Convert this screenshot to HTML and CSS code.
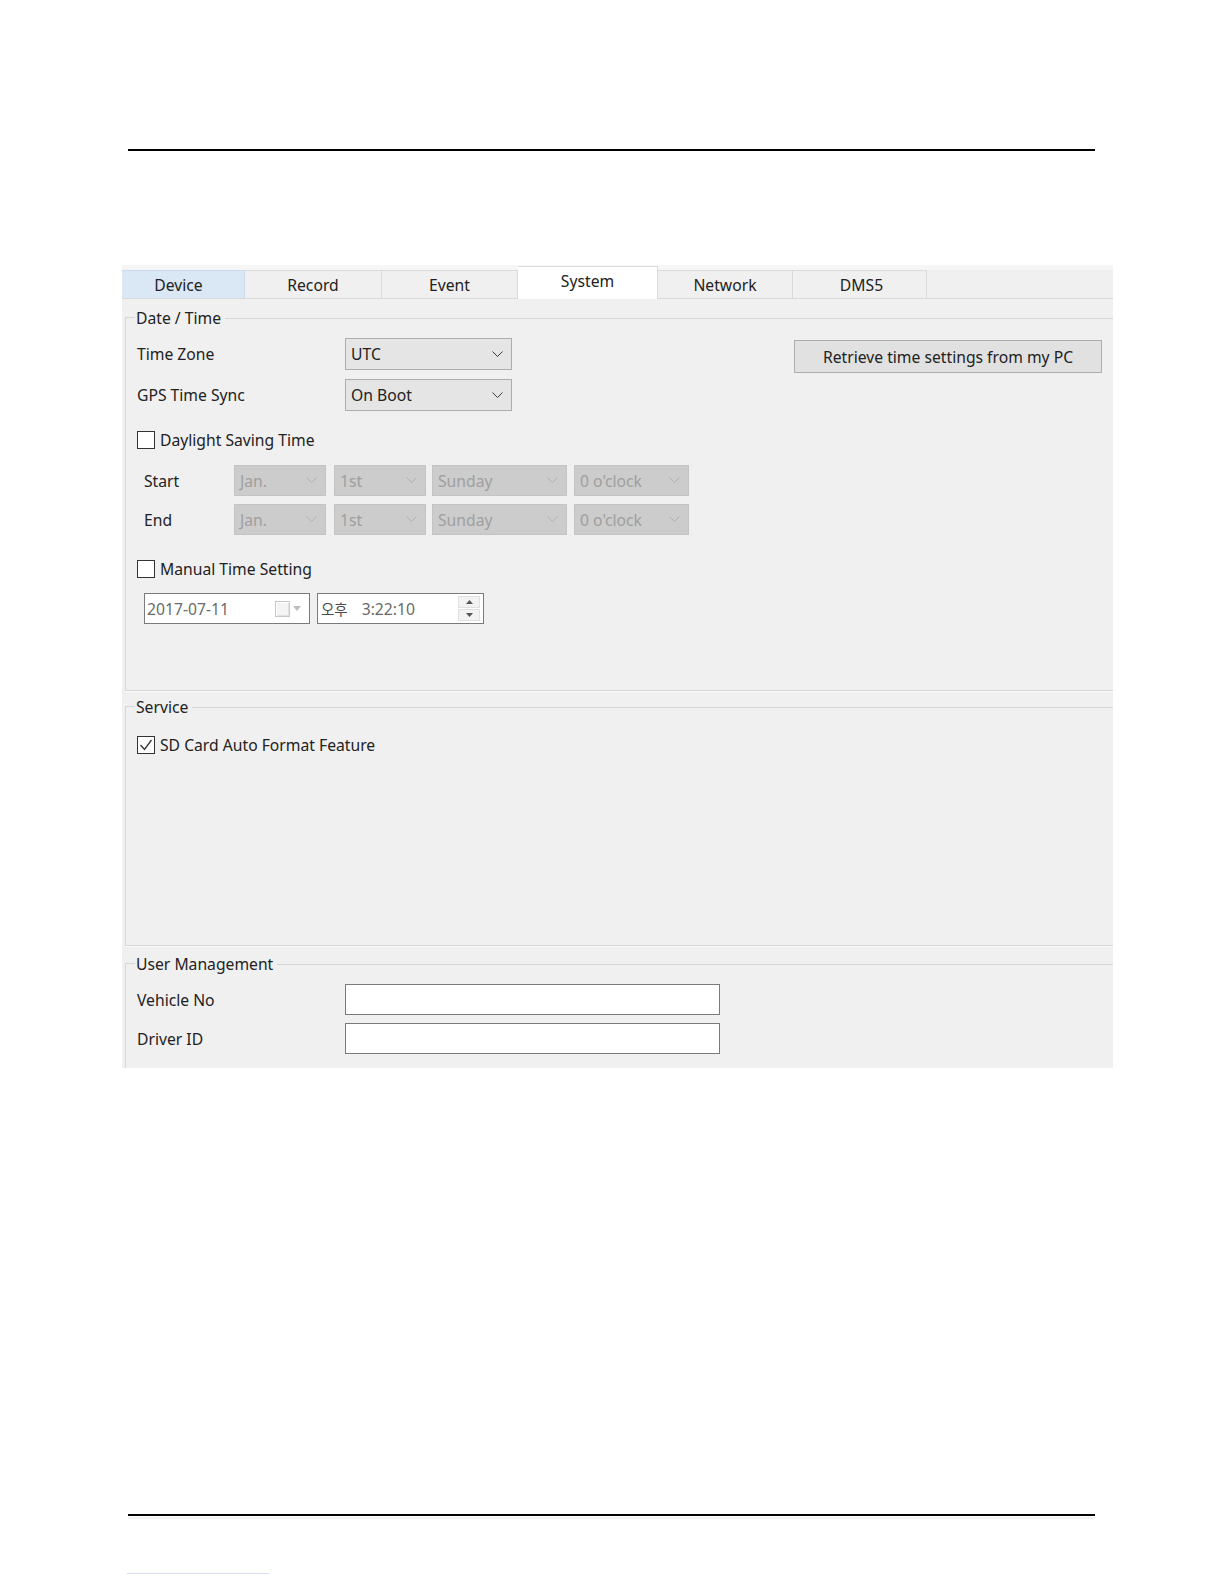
FILE: index.html
```html
<!DOCTYPE html>
<html lang="en">
<head>
<meta charset="utf-8">
<title>System settings</title>
<link rel="stylesheet" href="styles.css">
</head>
<body>
<div class="page">
  <div class="rule top"></div>

  <div class="panel">
    <div class="tabs">
      <div class="tab tab-device">Device</div>
      <div class="tab tab-record">Record</div>
      <div class="tab tab-event">Event</div>
      <div class="tab tab-system">System</div>
      <div class="tab tab-network">Network</div>
      <div class="tab tab-dms">DMS5</div>
    </div>

    <div class="group group-dt">
      <div class="gtitle"><span>Date / Time</span></div>
      <div class="gbody gbody-dt">
        <div class="toprow">
          <div class="fields">
            <div class="frow">
              <span class="flabel">Time Zone</span>
              <div class="select sel-main"><span>UTC</span><svg viewBox="0 0 11 7"><polyline points="0.5,0.5 5.5,5.5 10.5,0.5"/></svg></div>
            </div>
            <div class="frow frow2">
              <span class="flabel">GPS Time Sync</span>
              <div class="select sel-main"><span>On Boot</span><svg viewBox="0 0 11 7"><polyline points="0.5,0.5 5.5,5.5 10.5,0.5"/></svg></div>
            </div>
          </div>
          <div class="btn">Retrieve time settings from my PC</div>
        </div>

        <div class="check-row cr-dst">
          <span class="cbox"></span><span>Daylight Saving Time</span>
        </div>

        <div class="drow drow-start">
          <span class="dlabel">Start</span>
          <div class="select dis w-mon"><span>Jan.</span><svg viewBox="0 0 11 7"><polyline points="0.5,0.5 5.5,5.5 10.5,0.5"/></svg></div>
          <div class="select dis w-wk"><span>1st</span><svg viewBox="0 0 11 7"><polyline points="0.5,0.5 5.5,5.5 10.5,0.5"/></svg></div>
          <div class="select dis w-day"><span>Sunday</span><svg viewBox="0 0 11 7"><polyline points="0.5,0.5 5.5,5.5 10.5,0.5"/></svg></div>
          <div class="select dis w-hr"><span>0 o'clock</span><svg viewBox="0 0 11 7"><polyline points="0.5,0.5 5.5,5.5 10.5,0.5"/></svg></div>
        </div>
        <div class="drow drow-end">
          <span class="dlabel">End</span>
          <div class="select dis w-mon"><span>Jan.</span><svg viewBox="0 0 11 7"><polyline points="0.5,0.5 5.5,5.5 10.5,0.5"/></svg></div>
          <div class="select dis w-wk"><span>1st</span><svg viewBox="0 0 11 7"><polyline points="0.5,0.5 5.5,5.5 10.5,0.5"/></svg></div>
          <div class="select dis w-day"><span>Sunday</span><svg viewBox="0 0 11 7"><polyline points="0.5,0.5 5.5,5.5 10.5,0.5"/></svg></div>
          <div class="select dis w-hr"><span>0 o'clock</span><svg viewBox="0 0 11 7"><polyline points="0.5,0.5 5.5,5.5 10.5,0.5"/></svg></div>
        </div>

        <div class="check-row cr-manual">
          <span class="cbox"></span><span>Manual Time Setting</span>
        </div>

        <div class="dtrow">
          <div class="field date-field">
            <span class="fval">2017-07-11</span>
            <span class="cal-ico"><span class="cal-sq"></span><svg class="cal-arrow" viewBox="0 0 8 5"><polygon points="0,0 8,0 4,5"/></svg></span>
          </div>
          <div class="field time-field">
            <span class="fval"><span class="ampm">오후</span>3:22:10</span>
            <span class="spin">
              <span class="spin-btn"><svg viewBox="0 0 7 4"><polygon points="0,4 7,4 3.5,0"/></svg></span>
              <span class="spin-btn"><svg viewBox="0 0 7 4"><polygon points="0,0 7,0 3.5,4"/></svg></span>
            </span>
          </div>
        </div>
      </div>
    </div>

    <div class="group group-svc">
      <div class="gtitle"><span>Service</span></div>
      <div class="gbody gbody-svc">
        <div class="check-row cr-sd">
          <span class="cbox checked"><svg viewBox="0 0 16 16"><polyline points="2.5,8 6.5,12.5 13.5,3"/></svg></span><span>SD Card Auto Format Feature</span>
        </div>
      </div>
    </div>

    <div class="group group-user">
      <div class="gtitle"><span>User Management</span></div>
      <div class="gbody gbody-user">
        <div class="frow urow1">
          <span class="flabel">Vehicle No</span>
          <div class="tinput"></div>
        </div>
        <div class="frow urow2">
          <span class="flabel">Driver ID</span>
          <div class="tinput"></div>
        </div>
      </div>
    </div>
  </div>

  <div class="rule bottom"></div>
  <div class="foot-line"></div>
</div>
</body>
</html>
```

FILE: styles.css
```css
* { box-sizing: border-box; }

html, body {
  margin: 0;
  background: #ffffff;
}

body {
  width: 1224px;
  height: 1584px;
  font-family: "Noto Sans", "Liberation Sans", "Noto Sans CJK KR", sans-serif;
  font-size: 15.7px;
  color: #222222;
  overflow: hidden;
}

.page {
  padding-top: 149px;
}

.rule {
  height: 2px;
  width: 967px;
  margin-left: 128px;
  background: #000;
}

.rule.bottom {
  margin-top: 446px;
  box-shadow: 0 3px 0 #f2f2f2;
}

.foot-line {
  margin: 57px 0 0 127px;
  width: 142px;
  height: 1px;
  background: #d6ddf0;
}

/* ---------- panel ---------- */
.panel {
  margin: 114px 0 0 122px;
  width: 991px;
  height: 803px;
  background: #f0f0f0;
  display: flex;
  flex-direction: column;
  overflow: hidden;
}

.tabs {
  display: flex;
  flex: none;
  height: 34px;
  padding-top: 5px;
  background: linear-gradient(#f6f6f6 0 5px, #f0f0f0 5px);
  border-bottom: 1px solid #dadada;
}

.tab {
  height: 28px;
  display: flex;
  align-items: center;
  justify-content: center;
  border-top: 1px solid #dadada;
  border-right: 1px solid #dadada;
  background: #f0f0f0;
  color: #222222;
}

.tab-device { width: 123px; background: #dae8f6; border-color: #c9dcee; padding-right: 9px; }
.tab-record { width: 137px; }
.tab-event { width: 136px; }
.tab-system {
  width: 140px;
  height: 33px;
  margin-top: -4px;
  margin-bottom: -1px;
  background: #ffffff;
  padding-bottom: 4px;
}
.tab-network { width: 135px; }
.tab-dms { width: 134px; padding-left: 4px; }

/* ---------- group boxes ---------- */
.group {
  margin-left: 3px;
  flex: none;
}

.group-dt { margin-top: 9px; }
.group-svc { margin-top: 6px; }
.group-user { margin-top: 8px; flex: 1; display: flex; flex-direction: column; }

.gtitle {
  display: flex;
  align-items: center;
  height: 20px;
}

.gtitle::before {
  content: "";
  align-self: flex-end;
  width: 9px;
  height: 10px;
  border-top: 1px solid #d6d6d6;
  border-left: 1px solid #d6d6d6;
}

.gtitle::after {
  content: "";
  flex: 1;
  height: 1px;
  margin-left: 4px;
  background: #d6d6d6;
}

.gtitle span {
  padding-left: 1px;
  line-height: 20px;
}

.gbody {
  display: flow-root;
  border-left: 1px solid #d6d6d6;
  padding-left: 11px;
}

.gbody-dt {
  height: 363px;
  border-bottom: 1px solid #d6d6d6;
  box-shadow: 0 1px 0 #fafafa;
}

.gbody-svc {
  height: 229px;
  border-bottom: 1px solid #d6d6d6;
  box-shadow: 0 1px 0 #fafafa;
}

.gbody-user {
  flex: 1;
}

/* ---------- rows ---------- */
.toprow {
  display: flex;
  align-items: flex-start;
  margin-top: 10px;
}

.fields { display: flex; flex-direction: column; }

.frow {
  display: flex;
  align-items: center;
  height: 32px;
}

.frow2 { margin-top: 9px; }

.flabel {
  width: 208px;
  flex: none;
}

.select {
  display: flex;
  align-items: center;
  justify-content: space-between;
  height: 32px;
  padding: 0 8px 0 5px;
  border: 1px solid #adadad;
  background: #e5e5e5;
  color: #222222;
}

.select svg {
  width: 11px;
  height: 7px;
  fill: none;
  stroke: #3c3c3c;
  stroke-width: 1;
}

.sel-main { width: 167px; }

.btn {
  margin: 2px 11px 0 auto;
  width: 308px;
  height: 33px;
  display: flex;
  align-items: center;
  justify-content: center;
  border: 1px solid #adadad;
  background: #e1e1e1;
}

.check-row {
  display: flex;
  align-items: center;
  height: 20px;
}

.cr-dst { margin-top: 19px; }
.cr-manual { margin-top: 24px; }
.cr-sd { margin-top: 18px; }

.cbox {
  width: 18px;
  height: 18px;
  margin-right: 5px;
  border: 1px solid #333333;
  background: #ffffff;
  display: flex;
  align-items: center;
  justify-content: center;
}

.cbox svg {
  width: 16px;
  height: 16px;
  fill: none;
  stroke: #333333;
  stroke-width: 1.3;
}

.drow {
  display: flex;
  align-items: center;
  height: 31px;
  padding-left: 7px;
}

.drow-start { margin-top: 15px; }
.drow-end { margin-top: 8px; }

.dlabel {
  width: 90px;
  flex: none;
}

.select.dis {
  height: 31px;
  background: #cccccc;
  border-color: #c4c4c4;
  color: #9f9f9f;
}

.select.dis svg { stroke: #b0b0b0; }

.w-mon { width: 92px; }
.w-wk { width: 92px; margin-left: 8px; }
.w-day { width: 135px; margin-left: 6px; }
.w-hr { width: 115px; margin-left: 7px; }

.dtrow {
  display: flex;
  margin-top: 14px;
  padding-left: 7px;
}

.field {
  height: 31px;
  display: flex;
  align-items: center;
  border: 1px solid #7a7a7a;
  background: #ffffff;
  padding-left: 2px;
}

.date-field { width: 166px; }
.time-field { width: 167px; margin-left: 7px; padding-left: 3px; }

.fval {
  flex: 1;
  color: #6a6a6a;
}

.ampm {
  font-family: "Noto Sans CJK KR", sans-serif;
  font-size: 14.5px;
  color: #4a4a4a;
  margin-right: 14px;
}

.cal-ico {
  display: flex;
  align-items: center;
  margin-right: 8px;
}

.cal-sq {
  width: 15px;
  height: 16px;
  border: 1px solid #c8c8c8;
  background: #f4f4f4;
  box-shadow: inset 1px 1px 0 #ffffff, inset -1px -1px 0 #e2e2e2;
}

.cal-arrow {
  width: 8px;
  height: 5px;
  margin-left: 3px;
  fill: #bdbdbd;
}

.spin {
  display: flex;
  flex-direction: column;
  gap: 1px;
  margin-right: 3px;
}

.spin-btn {
  width: 22px;
  height: 12px;
  display: flex;
  align-items: center;
  justify-content: center;
  background: #f2f2f2;
  border: 1px solid #e0e0e0;
}

.spin-btn svg {
  width: 7px;
  height: 4px;
  fill: #555555;
}

.urow1 { margin-top: 10px; height: 31px; }
.urow2 { margin-top: 8px; height: 31px; }

.tinput {
  width: 375px;
  height: 31px;
  border: 1px solid #7a7a7a;
  background: #ffffff;
}
```
